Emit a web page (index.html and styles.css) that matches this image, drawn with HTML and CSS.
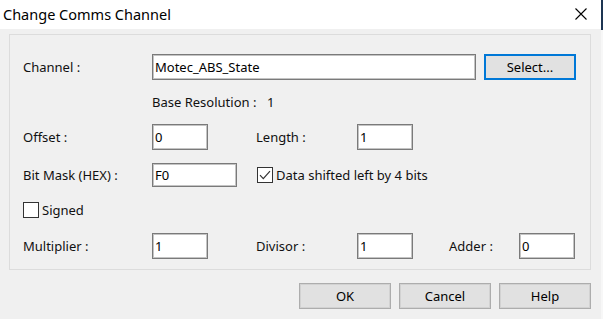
FILE: index.html
```html
<!DOCTYPE html>
<html lang="en">
<head>
    <meta charset="UTF-8">
    <title>Change Comms Channel</title>
    <link rel="stylesheet" href="styles.css">
</head>
<body>
    <div class="screen">
        <div class="window">
            <div class="titlebar">
                <span class="title">Change Comms Channel</span>
                <svg class="close" width="12" height="12" viewBox="0 0 12 12">
                    <path d="M0.5 0.5 L11.5 11.5 M11.5 0.5 L0.5 11.5" stroke="#000" stroke-width="1.1" fill="none"/>
                </svg>
            </div>
            <div class="content">
                <div class="group">
                    <div class="row row-channel">
                        <label class="lbl">Channel :</label>
                        <input class="field field-channel" type="text" value="Motec_ABS_State">
                        <button class="btn btn-select">Select...</button>
                    </div>
                    <div class="row row-base">
                        <span class="base-label">Base Resolution :</span>
                        <span>1</span>
                    </div>
                    <div class="row row-std">
                        <label class="lbl">Offset :</label>
                        <input class="field field-num" type="text" value="0">
                        <label class="lbl lbl-mid">Length :</label>
                        <input class="field field-num" type="text" value="1">
                    </div>
                    <div class="row row-mask">
                        <label class="lbl">Bit Mask (HEX) :</label>
                        <input class="field field-mask" type="text" value="F0">
                        <span class="check check-shift">
                            <span class="box">
                                <svg width="14" height="14" viewBox="0 0 14 14">
                                    <path d="M2 7.2 L5.3 10.6 L12 3.2" stroke="#333" stroke-width="1.2" fill="none"/>
                                </svg>
                            </span>
                            Data shifted left by 4 bits
                        </span>
                    </div>
                    <div class="row row-signed">
                        <span class="check">
                            <span class="box"></span>
                            Signed
                        </span>
                    </div>
                    <div class="row row-std">
                        <label class="lbl">Multiplier :</label>
                        <input class="field field-num" type="text" value="1">
                        <label class="lbl lbl-mid">Divisor :</label>
                        <input class="field field-num" type="text" value="1">
                        <label class="lbl lbl-adder">Adder :</label>
                        <input class="field field-num" type="text" value="0">
                    </div>
                </div>
                <div class="actions">
                    <button class="btn">OK</button>
                    <button class="btn">Cancel</button>
                    <button class="btn">Help</button>
                </div>
            </div>
        </div>
        <div class="edge"></div>
    </div>
</body>
</html>
```

FILE: styles.css
```css
* {
    margin: 0;
    padding: 0;
    box-sizing: border-box;
}
body {
    font-family: 'Noto Sans', 'Open Sans', sans-serif;
    font-size: 13px;
    color: #111;
    background: #f0f0f0;
    overflow: hidden;
}
.screen {
    display: flex;
    width: 603px;
    height: 319px;
}
.window {
    width: 601px;
    background: #f0f0f0;
}
.edge {
    width: 2px;
    background: linear-gradient(#1d3552 0, #1d3552 30px, #f7f7f7 30px);
}
/* title bar */
.titlebar {
    height: 29px;
    background: #ffffff;
    display: flex;
    align-items: center;
    justify-content: space-between;
    padding: 0 14px 2px 3px;
}
.title {
    font-size: 14.5px;
    color: #000;
}
.close {
    display: block;
    margin-top: 1px;
}
/* main area */
.content {
    padding-top: 5px;
}
.group {
    margin-left: 9px;
    width: 582px;
    border: 1px solid #dcdcdc;
    padding: 19px 0 10px 13px;
}
.row {
    display: flex;
    align-items: center;
}
.lbl {
    width: 129px;
}
.lbl-mid {
    width: 101px;
    margin-left: 48px;
}
.lbl-adder {
    width: 70px;
    margin-left: 36px;
}
.field {
    font-family: inherit;
    font-size: inherit;
    color: #000;
    background: #fff;
    border: 1px solid #7a7a7a;
    box-shadow: inset 0 0 0 1px #c4c4c4;
    padding: 0 0 0 2px;
    height: 26px;
    outline: none;
}
.field-channel {
    width: 324px;
}
.field-num {
    width: 56px;
}
.field-mask {
    width: 85px;
    height: 24px;
}
.row-channel {
    height: 26px;
}
.row-base {
    height: 44px;
    padding-left: 129px;
}
.base-label {
    width: 115px;
}
.row-std {
    height: 26px;
}
.row-mask {
    height: 24px;
    margin-top: 13px;
}
.row-signed {
    height: 46px;
}
/* checkboxes */
.check {
    display: flex;
    align-items: center;
    gap: 3px;
}
.check-shift {
    margin-left: 20px;
}
.box {
    width: 16px;
    height: 16px;
    border: 1px solid #333;
    background: #fff;
    display: flex;
    align-items: center;
    justify-content: center;
}
.box svg {
    display: block;
}
/* buttons */
.btn {
    font-family: inherit;
    font-size: inherit;
    color: #000;
    width: 92px;
    height: 26px;
    background: #e1e1e1;
    border: 1px solid #adadad;
    box-shadow: inset 0 0 0 1px #d2d2d2;
}
.btn-select {
    margin-left: 8px;
    border: 1px solid #0078d7;
    box-shadow: inset 0 0 0 1px #0078d7;
}
.actions {
    display: flex;
    justify-content: flex-end;
    gap: 8px;
    margin-top: 13px;
    padding-right: 10px;
}
```
